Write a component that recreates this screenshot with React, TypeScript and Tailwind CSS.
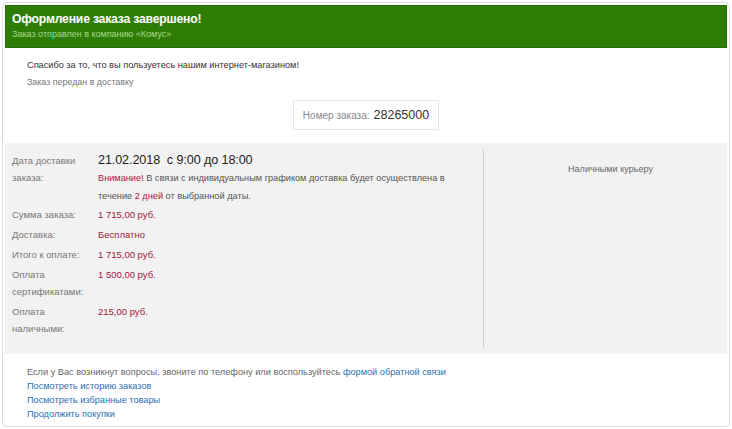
import React from 'react';

const rows: { label: string[]; value: string }[] = [
  { label: ['Сумма заказа:'], value: '1 715,00 руб.' },
  { label: ['Доставка:'], value: 'Бесплатно' },
  { label: ['Итого к оплате:'], value: '1 715,00 руб.' },
  { label: ['Оплата', 'сертификатами:'], value: '1 500,00 руб.' },
  { label: ['Оплата', 'наличными:'], value: '215,00 руб.' },
];

const links = ['Посмотреть историю заказов', 'Посмотреть избранные товары', 'Продолжить покупки'];

const App: React.FC = () => {
  return (
    <div className="w-[732px] h-[429px] bg-white p-[2px] font-['Liberation_Sans',Arial,sans-serif]">
      <div className="h-[425px] border border-[#dcdcdc] rounded-[5px] p-[2px] flex flex-col">
        {/* header */}
        <div className="h-[43px] bg-[#2e7e06] border border-[#2a6a0a] px-[6px] pt-[5px]">
          <div className="text-[12.2px] leading-[17px] text-white font-bold tracking-[-0.2px]">
            Оформление заказа завершено!
          </div>
          <div className="text-[9px] leading-[13px] text-[#a9d88e]">
            Заказ отправлен в компанию «Комус»
          </div>
        </div>

        <div className="px-[22px] pt-[9px]">
          <div className="text-[9.2px] leading-[17px] text-[#333]">
            Спасибо за то, что вы пользуетесь нашим интернет-магазином!
          </div>
          <div className="text-[8.9px] leading-[17px] text-[#777]">Заказ передан в доставку</div>
        </div>

        <div className="flex justify-center mt-[9px]">
          <div className="h-[30px] w-[146px] border border-[#e6e6e6] flex items-center justify-center gap-[4px]">
            <span className="text-[10px] text-[#888]">Номер заказа:</span>
            <span className="text-[12.5px] text-[#333]">28265000</span>
          </div>
        </div>

        {/* summary panel */}
        <div className="mt-[13px] h-[211px] bg-[#f2f2f2] flex pt-[6px] pb-[6px]">
          <div className="w-[479px] border-r border-[#cfcfcf] pl-[7px] pt-[3px]">
            <table className="border-collapse">
              <tbody>
                <tr className="align-top">
                  <td className="w-[86px] text-[9.5px] leading-[17px] text-[#777]">
                    Дата доставки
                    <br />
                    заказа:
                  </td>
                  <td className="text-[9.2px] leading-[18px] text-[#555]">
                    <div className="text-[12.6px] leading-[17px] text-[#222] tracking-[-0.1px]">
                      21.02.2018&nbsp;&nbsp;с 9:00 до 18:00
                    </div>
                    <div>
                      <span className="text-[#b0163f]">Внимание!</span> В связи с индивидуальным графиком доставка будет
                      осуществлена в
                    </div>
                    <div>
                      течение <span className="text-[#b0163f]">2 дней</span> от выбранной даты.
                    </div>
                  </td>
                </tr>
                {rows.map((r, i) => (
                  <tr key={i} className="align-top">
                    <td className="pt-[1px] pb-[2px] text-[9.5px] leading-[17px] text-[#777]">
                      {r.label.map((l, j) => (
                        <div key={j}>{l}</div>
                      ))}
                    </td>
                    <td className="pt-[1px] pb-[2px] text-[9.5px] leading-[17px] text-[#a3163c]">{r.value}</td>
                  </tr>
                ))}
              </tbody>
            </table>
          </div>
          <div className="flex-1 pt-[14px] pl-[10px] text-center text-[9.1px] text-[#666]">Наличными курьеру</div>
        </div>

        {/* footer */}
        <div className="px-[22px] pt-[11px] text-[9.2px] leading-[14px]">
          <div className="text-[#666]">
            Если у Вас возникнут вопросы, звоните по телефону или воспользуйтесь{' '}
            <a className="text-[#2a6fb3]">формой обратной связи</a>
          </div>
          {links.map((l) => (
            <div key={l}>
              <a className="text-[#2a6fb3]">{l}</a>
            </div>
          ))}
        </div>
      </div>
    </div>
  );
};

export default App;
